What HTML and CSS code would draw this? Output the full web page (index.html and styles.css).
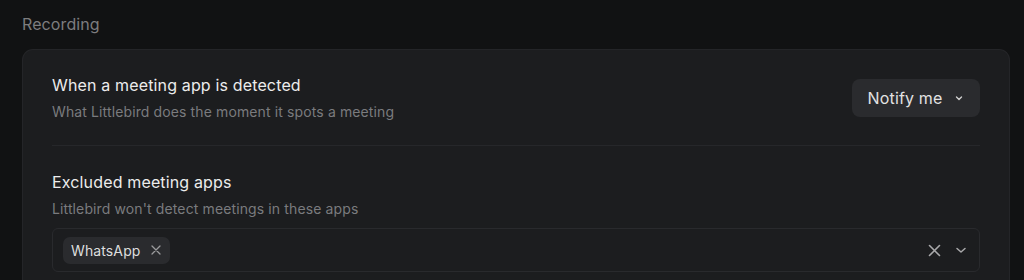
FILE: index.html
```html
<!DOCTYPE html>
<html>
<head>
<meta charset="utf-8">
<link rel="stylesheet" href="styles.css">
</head>
<body>
<div class="page">
  <h2 class="section-title">Recording</h2>
  <div class="card">
    <div class="row">
      <div class="row-text">
        <div class="label">When a meeting app is detected</div>
        <div class="desc">What Littlebird does the moment it spots a meeting</div>
      </div>
      <button class="select-btn">Notify me
        <svg class="chev" width="10" height="10" viewBox="0 0 10 10"><path d="M2.5 4 L5 6.5 L7.5 4" fill="none" stroke="currentColor" stroke-width="1.4" stroke-linecap="round" stroke-linejoin="round"/></svg>
      </button>
    </div>
    <div class="divider"></div>
    <div class="block">
      <div class="label">Excluded meeting apps</div>
      <div class="desc">Littlebird won't detect meetings in these apps</div>
      <div class="multi">
        <div class="tags">
          <span class="tag">WhatsApp
            <svg width="10" height="10" viewBox="0 0 10 10"><path d="M1 1 L9 9 M9 1 L1 9" fill="none" stroke="currentColor" stroke-width="1.3" stroke-linecap="round"/></svg>
          </span>
        </div>
        <div class="controls">
          <svg width="13" height="13" viewBox="0 0 13 13"><path d="M1.5 1.5 L11.5 11.5 M11.5 1.5 L1.5 11.5" fill="none" stroke="currentColor" stroke-width="1.6" stroke-linecap="round"/></svg>
          <svg width="12" height="12" viewBox="0 0 12 12"><path d="M2 4.5 L6 8 L10 4.5" fill="none" stroke="currentColor" stroke-width="1.5" stroke-linecap="round" stroke-linejoin="round"/></svg>
        </div>
      </div>
    </div>
  </div>
</div>
</body>
</html>
```

FILE: styles.css
```css
* { box-sizing: border-box; }
html, body { margin: 0; padding: 0; }
body {
  background: #111213;
  font-family: Inter, "Noto Sans", sans-serif;
  color: #e6e6e6;
  width: 1024px;
  height: 280px;
  overflow: hidden;
}
.page {
  padding: 12px 14px 0 22px;
}
.section-title {
  margin: 0;
  font-size: 16px;
  font-weight: 400;
  line-height: 24px;
  color: #7d7d7f;
  letter-spacing: 0.1px;
}
.card {
  margin-top: 13px;
  background: #1c1d1f;
  border: 1px solid #242528;
  border-bottom: 0;
  border-radius: 11px 11px 0 0;
  padding: 0 29px;
  height: 231px;
}
.row {
  display: flex;
  align-items: center;
  justify-content: space-between;
  padding: 23px 0 22px;
}
.label {
  font-size: 16px;
  line-height: 24px;
  color: #ececec;
  letter-spacing: 0.15px;
}
.desc {
  font-size: 14px;
  line-height: 22px;
  color: #7a7b7e;
  margin-top: 4px;
  letter-spacing: 0.12px;
}
.select-btn {
  display: flex;
  align-items: center;
  gap: 12px;
  height: 38px;
  width: 128px;
  padding: 0 14px;
  justify-content: center;
  background: #2a2b2e;
  border: none;
  border-radius: 8px;
  color: #e2e2e2;
  font-family: inherit;
  font-size: 16px;
  letter-spacing: 0.15px;
}
.chev { color: #cfcfcf; }
.divider {
  height: 1px;
  background: #26272a;
}
.block {
  padding-top: 24px;
}
.multi {
  margin-top: 8px;
  height: 44px;
  border: 1px solid #292a2d;
  border-radius: 6px;
  display: flex;
  align-items: center;
  justify-content: space-between;
  padding: 0 12px 0 10px;
}
.tag {
  display: inline-flex;
  align-items: center;
  gap: 10px;
  height: 27px;
  padding: 0 9px 0 8px;
  background: #2a2b2e;
  border-radius: 7px;
  font-size: 14px;
  color: #dedede;
  letter-spacing: 0.12px;
}
.tag svg { color: #9a9a9c; }
.controls {
  display: flex;
  align-items: center;
  gap: 14px;
  color: #a9a9ab;
}
```
